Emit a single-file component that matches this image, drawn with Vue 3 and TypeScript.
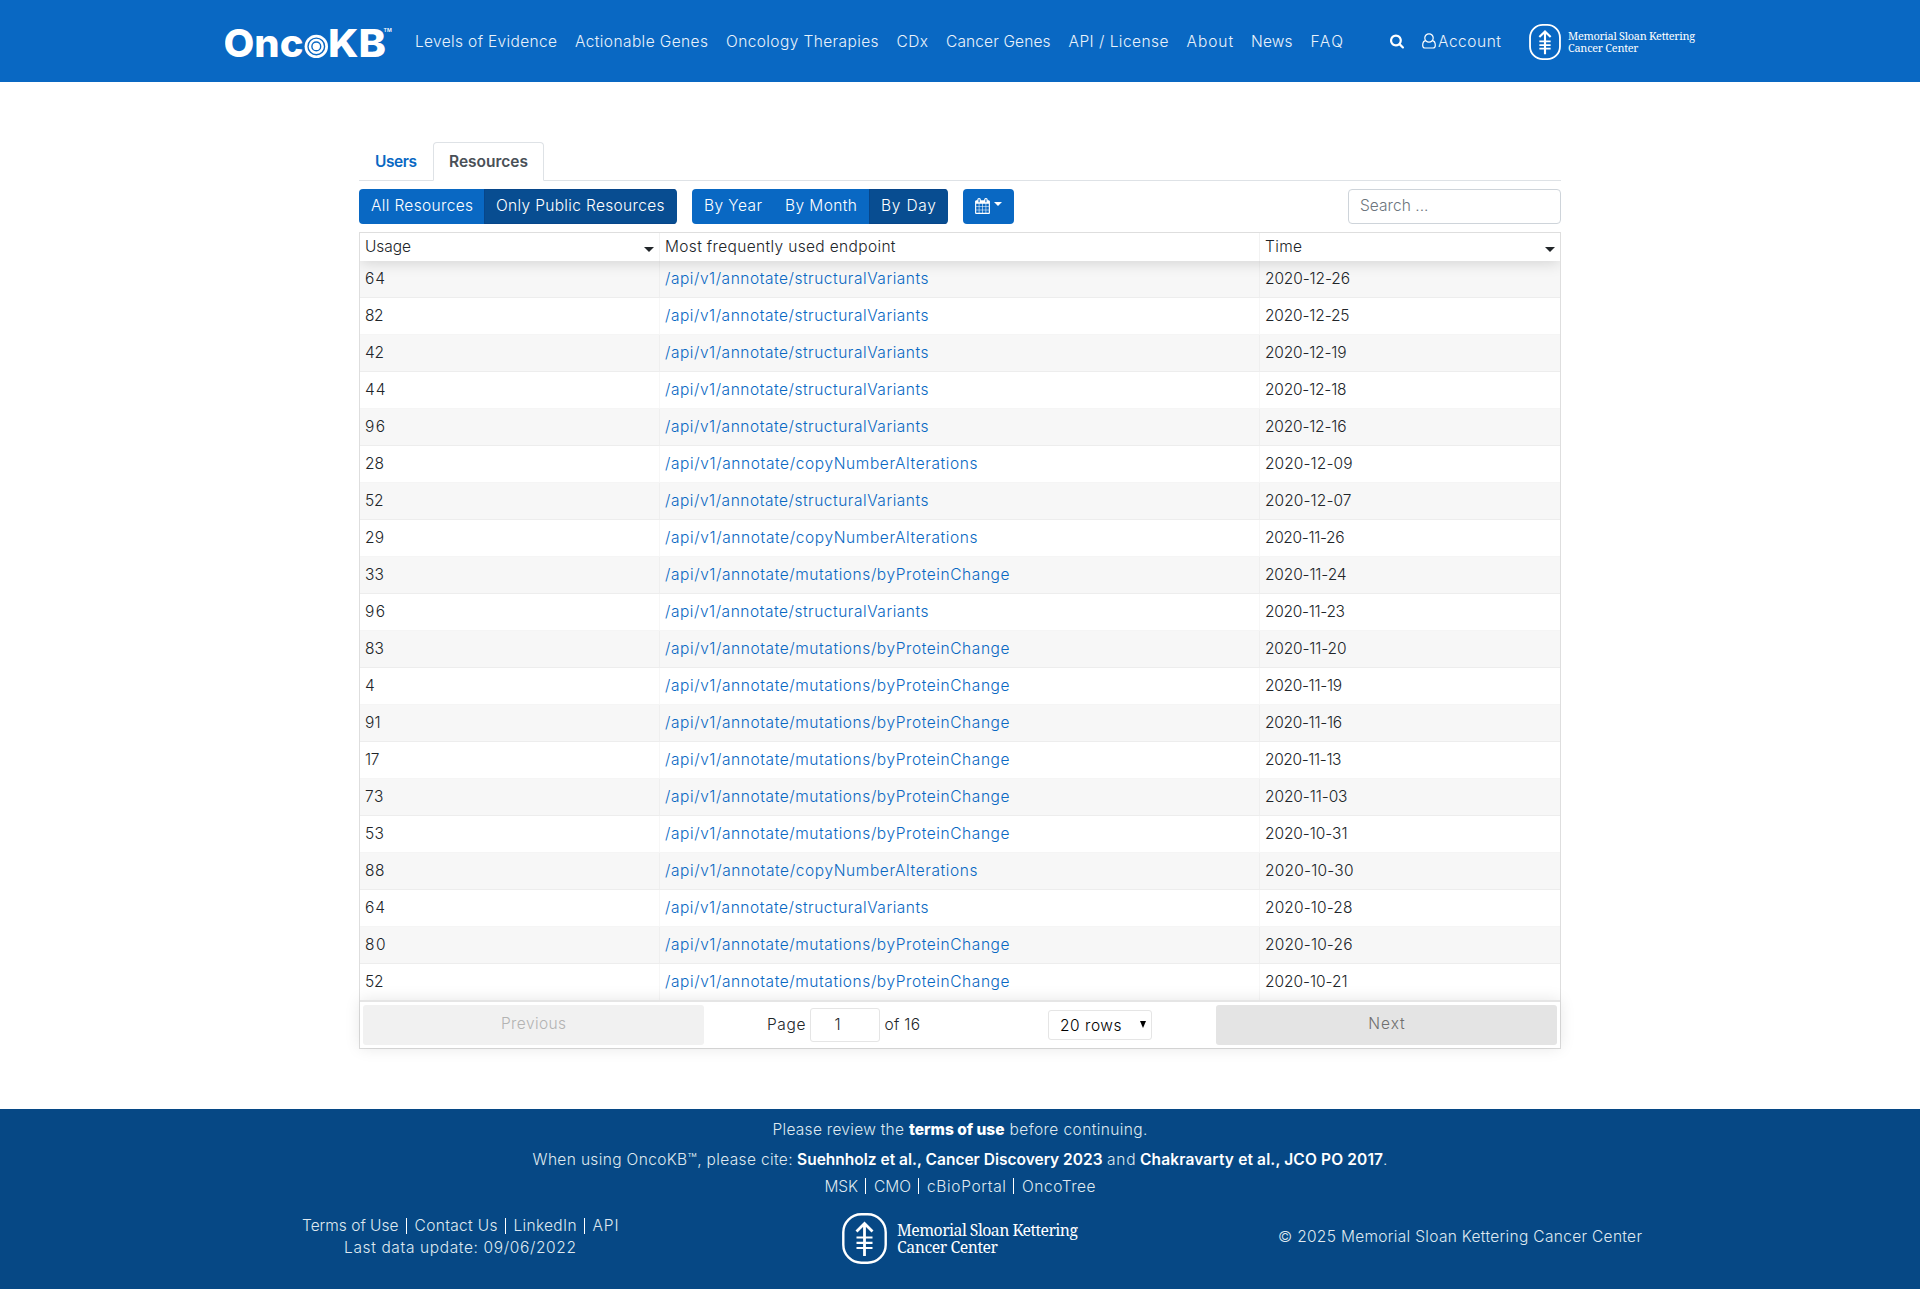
<script setup lang="ts">
interface UsageRow { usage: string; uw: number; endpoint: string; time: string; tw: number }

// Tunes letter-spacing so a label occupies its intended width in pixels.
const vFit = {
  mounted(el: HTMLElement, binding: { value: number }) {
    const count = (el.textContent ?? '').length
    if (count < 2) return
    const spacing = (binding.value - el.getBoundingClientRect().width) / (count - 1)
    el.style.letterSpacing = `${spacing}px`
    el.style.marginRight = `${-spacing}px`
  },
}

const nav = [
  { label: 'Levels of Evidence', w: 142 },
  { label: 'Actionable Genes', w: 133 },
  { label: 'Oncology Therapies', w: 152.5 },
  { label: 'CDx', w: 31.5 },
  { label: 'Cancer Genes', w: 104.5 },
  { label: 'API / License', w: 100 },
  { label: 'About', w: 46.5 },
  { label: 'News', w: 41.5 },
  { label: 'FAQ', w: 32.5 },
]

const SV = '/api/v1/annotate/structuralVariants'
const CN = '/api/v1/annotate/copyNumberAlterations'
const MU = '/api/v1/annotate/mutations/byProteinChange'
const endpointWidth: Record<string, number> = { [SV]: 263.5, [CN]: 312.5, [MU]: 344.5 }

const rows: UsageRow[] = [
  { usage: '64', uw: 20, endpoint: SV, time: '2020-12-26', tw: 85 },
  { usage: '82', uw: 18.5, endpoint: SV, time: '2020-12-25', tw: 84.5 },
  { usage: '42', uw: 19, endpoint: SV, time: '2020-12-19', tw: 81.5 },
  { usage: '44', uw: 20.5, endpoint: SV, time: '2020-12-18', tw: 81.5 },
  { usage: '96', uw: 20, endpoint: SV, time: '2020-12-16', tw: 81.5 },
  { usage: '28', uw: 19, endpoint: CN, time: '2020-12-09', tw: 87.5 },
  { usage: '52', uw: 18.5, endpoint: SV, time: '2020-12-07', tw: 86.5 },
  { usage: '29', uw: 19, endpoint: CN, time: '2020-11-26', tw: 79.5 },
  { usage: '33', uw: 19, endpoint: MU, time: '2020-11-24', tw: 81.5 },
  { usage: '96', uw: 20, endpoint: SV, time: '2020-11-23', tw: 80 },
  { usage: '83', uw: 19, endpoint: MU, time: '2020-11-20', tw: 81.5 },
  { usage: '4', uw: 10, endpoint: MU, time: '2020-11-19', tw: 77 },
  { usage: '91', uw: 15.5, endpoint: MU, time: '2020-11-16', tw: 77 },
  { usage: '17', uw: 14.5, endpoint: MU, time: '2020-11-13', tw: 76.5 },
  { usage: '73', uw: 18.5, endpoint: MU, time: '2020-11-03', tw: 82.5 },
  { usage: '53', uw: 19, endpoint: MU, time: '2020-10-31', tw: 82.5 },
  { usage: '88', uw: 19.5, endpoint: CN, time: '2020-10-30', tw: 88.5 },
  { usage: '64', uw: 20, endpoint: SV, time: '2020-10-28', tw: 87.5 },
  { usage: '80', uw: 20.5, endpoint: MU, time: '2020-10-26', tw: 87.5 },
  { usage: '52', uw: 18.5, endpoint: MU, time: '2020-10-21', tw: 82.5 },
]
</script>

<template>
  <div class="page">
    <header class="header">
      <svg class="logo" width="170" height="82" viewBox="0 0 170 82">
        <g fill="#fff" font-family="Inter, sans-serif" font-weight="800" font-size="38.5">
          <text x="-1.5" y="57.2" textLength="80" lengthAdjust="spacingAndGlyphs">Onc</text>
          <text x="103" y="57.2" textLength="58" lengthAdjust="spacingAndGlyphs">KB</text>
          <text x="158.6" y="32.2" font-size="4.8" font-weight="600" textLength="8.2" lengthAdjust="spacingAndGlyphs">TM</text>
        </g>
        <circle cx="91.3" cy="46.4" r="11.7" fill="#fff" />
        <g fill="none" stroke="#0968c3" stroke-width="1.4">
          <circle cx="91.3" cy="46.4" r="8.3" />
          <circle cx="91.3" cy="46.4" r="4.4" />
        </g>
      </svg>
      <nav class="nav">
        <a v-for="n in nav" :key="n.label"><span v-fit="n.w">{{ n.label }}</span></a>
      </nav>
      <svg class="search-icon" width="14" height="15" viewBox="0 100 1664 1700"><path fill="#fff" d="M1152 832q0-185-131.5-316.5T704 384 387.500 515.500 256 832t131.500 316.500T704 1280t316.500-131.500T1152 832zm512 832q0 52-38 90t-90 38q-54 0-90-38l-343-342q-179 124-399 124-143 0-273.500-55.500t-225-150-150-225T0 832t55.500-273.500 150-225 225-150T704 128t273.500 55.500 225 150 150 225T1408 832q0 220-124 399l343 343q37 37 37 90z" /></svg>
      <svg class="user-icon" width="14" height="16" viewBox="0 0 14 16" fill="none" stroke="#fff" stroke-width="1.2">
        <circle cx="7" cy="5" r="4.200" />
        <path d="M3.600 7.600C1.500 8 .7 9.900.7 12.200c0 1.600.9 2.800 2.300 2.800h8c1.400 0 2.300-1.200 2.300-2.800 0-2.300-.8-4.200-2.900-4.600" />
      </svg>
      <a class="account"><span v-fit="63">Account</span></a>
      <div class="msk">
        <svg width="32" height="36" viewBox="0 0 45 51" fill="none" stroke="#fff">
          <rect x="1.300" y="1.300" width="42.400" height="48.400" rx="18" stroke-width="2.600" />
          <path d="M22.500 10v33M14.500 18.500l8-8 8 8" stroke-width="3" />
          <path d="M14.500 24.500h16M14.500 29.800h16M14.500 35h16" stroke-width="2.400" />
        </svg>
        <div class="msk-text"><div><span v-fit="127">Memorial Sloan Kettering</span></div><div><span v-fit="70.500">Cancer Center</span></div></div>
      </div>
    </header>

    <main class="main">
      <div class="tabs">
        <a class="tab"><span v-fit="42">Users</span></a>
        <a class="tab active"><span v-fit="79">Resources</span></a>
      </div>
      <div class="toolbar">
        <div class="group">
          <button class="b1"><span v-fit="102">All Resources</span></button>
          <button class="b2 on"><span v-fit="168.5">Only Public Resources</span></button>
        </div>
        <div class="group">
          <button class="b3"><span v-fit="58">By Year</span></button>
          <button class="b4"><span v-fit="72">By Month</span></button>
          <button class="b5 on"><span v-fit="55">By Day</span></button>
        </div>
        <button class="cal">
          <svg width="15" height="16" viewBox="64 0 1664 1792"><path fill="#fff" d="M192 1664h288v-288H192v288zm352 0h320v-288H544v288zM192 1312h288V992H192v320zm352 0h320V992H544v320zM192 928h288V640H192v288zm736 736h320v-288H928v288zM544 928h320V640H544v288zm768 736h288v-288h-288v288zm-384-352h320V992H928v320zM576 448V160q0-13-9.500-22.500T544 128h-64q-13 0-22.500 9.500T448 160v288q0 13 9.500 22.500T480 480h64q13 0 22.500-9.500T576 448zm736 864h288V992h-288v320zM928 928h320V640H928v288zm384 0h288V640h-288v288zm32-480V160q0-13-9.500-22.500T1312 128h-64q-13 0-22.500 9.500T1216 160v288q0 13 9.500 22.500t22.500 9.500h64q13 0 22.500-9.500t9.500-22.500zm384-64v1280q0 52-38 90t-90 38H192q-52 0-90-38t-38-90V384q0-52 38-90t90-38h128v-96q0-66 47-113T480 0h64q66 0 113 47t47 113v96h384v-96q0-66 47-113t113-47h64q66 0 113 47t47 113v96h128q52 0 90 38t38 90z" /></svg>
          <i class="caret"></i>
        </button>
        <div class="search"><span v-fit="68.5">Search ...</span></div>
      </div>

      <div class="table">
        <div class="thead">
          <div class="c1"><span v-fit="46">Usage</span><i class="sort"></i></div>
          <div class="c2"><span v-fit="230.5">Most frequently used endpoint</span></div>
          <div class="c3"><span v-fit="37">Time</span><i class="sort"></i></div>
        </div>
        <div class="tbody">
          <div v-for="r in rows" :key="r.time" class="tr">
            <div class="c1"><span v-fit="r.uw">{{ r.usage }}</span></div>
            <div class="c2"><a v-fit="endpointWidth[r.endpoint]">{{ r.endpoint }}</a></div>
            <div class="c3"><span v-fit="r.tw">{{ r.time }}</span></div>
          </div>
        </div>
        <div class="pager">
          <div class="pbtn disabled"><span v-fit="65">Previous</span></div>
          <div class="center">
            <div class="pageinfo"><span v-fit="38.5">Page</span><div class="num">1</div><span v-fit="35.500">of 16</span></div>
            <div class="select"><span v-fit="61.500">20 rows</span><i></i></div>
          </div>
          <div class="pbtn next"><span v-fit="36.5">Next</span></div>
        </div>
      </div>
    </main>

    <footer class="footer">
      <div class="line l1"><span v-fit="131.5">Please review the</span><b class="strong" v-fit="95.5">terms of use</b><span v-fit="138">before continuing.</span></div>
      <div class="line l2"><span v-fit="260">When using OncoKB™, please cite:</span><b v-fit="305.5">Suehnholz et al., Cancer Discovery 2023</b><span v-fit="28.5">and</span><span class="cite"><b v-fit="243">Chakravarty et al., JCO PO 2017</b>.</span></div>
      <div class="line links l3"><a><span v-fit="33.500">MSK</span></a><a><span v-fit="37">CMO</span></a><a><span v-fit="79">cBioPortal</span></a><a><span v-fit="73.500">OncoTree</span></a></div>
      <div class="bottom">
        <div class="left">
          <div class="links"><a><span v-fit="96.500">Terms of Use</span></a><a><span v-fit="83">Contact Us</span></a><a><span v-fit="63">LinkedIn</span></a><a><span v-fit="26">API</span></a></div>
          <div class="update"><span v-fit="232">Last data update: 09/06/2022</span></div>
        </div>
        <div class="msk big">
          <svg width="45" height="51" viewBox="0 0 45 51" fill="none" stroke="#fff">
            <rect x="1.300" y="1.300" width="42.400" height="48.400" rx="18" stroke-width="2.400" />
            <path d="M22.500 10v33M14.500 18.500l8-8 8 8" stroke-width="2.800" />
            <path d="M14.500 24.500h16M14.500 29.800h16M14.500 35h16" stroke-width="2.200" />
          </svg>
          <div class="msk-text"><div><span v-fit="181">Memorial Sloan Kettering</span></div><div><span v-fit="101">Cancer Center</span></div></div>
        </div>
        <div class="copy"><span v-fit="364">© 2025 Memorial Sloan Kettering Cancer Center</span></div>
      </div>
    </footer>
  </div>
</template>

<style>
body { background: #fff; }
</style>

<style scoped>
* { box-sizing: border-box; }
.page { font: 350 15.5px/24px Inter, sans-serif; color: #212529; width: 1920px; height: 1289px; display: flex; flex-direction: column; overflow: hidden; }
span, a, b { white-space: nowrap; }
button { font: inherit; color: #fff; border: 0; background: #0968c3; margin: 0; padding: 0; }

.header { height: 82px; background: #0968c3; color: #e9f2fb; display: flex; align-items: center; padding-left: 225px; flex: none; }
.logo { flex: none; width: 170px; height: 82px; }
.nav { display: flex; gap: 18px; margin-left: 20px; width: 970px; flex: none; padding-top: 1px; }
.search-icon { margin-left: 5px; }
.user-icon { margin-left: 17.500px; }
.account { margin-left: 2.500px; width: 67.500px; padding-top: 1px; }
.msk { display: flex; align-items: center; margin-left: 23.500px; gap: 7px; font-family: "Noto Serif", "Liberation Serif", serif; font-weight: 400; color: #fff; padding-top: 1px; }
.msk-text { font-size: 10.900px; line-height: 12px; padding-top: 1px; }

.main { width: 1202px; margin: 60px auto 0; flex: none; height: 967px; }
.tabs { display: flex; height: 39px; border-bottom: 1px solid #dee2e6; font-weight: 600; }
.tab { height: 39px; color: #0968c3; padding: 7px 16px 0; border: 1px solid transparent; width: 74px; padding-left: 15px; }
.tab.active { width: 111px; color: #495057; background: #fff; border-color: #dee2e6 #dee2e6 #fff; border-radius: 4px 4px 0 0; }
.toolbar { display: flex; margin-top: 8px; height: 35px; }
.group { display: flex; margin-right: 15px; border-radius: 4px; overflow: hidden; }
.toolbar button { height: 35px; padding-left: 12px; padding-bottom: 2px; text-align: left; }
.toolbar button.on { background: #084d91; box-shadow: inset 1px 0 #07468a, inset 0 1px #07468a, inset 0 -1px #07468a; }
.toolbar .b1 { width: 125px; }
.toolbar .b2 { width: 193px; }
.toolbar .b3 { width: 81px; }
.toolbar .b4 { width: 96px; }
.toolbar .b5 { width: 79px; }
.toolbar .cal { width: 51px; border-radius: 4px; display: flex; align-items: center; gap: 4px; }
.caret { border: 4.500px solid transparent; border-top: 4.500px solid #fff; border-bottom: 0; width: 0; height: 0; margin-top: -3px; }
.search { margin-left: auto; width: 213px; height: 35px; border: 1px solid #ced4da; border-radius: 4px; color: #6c757d; padding: 4px 11px; }

.table { margin-top: 8px; border: 1px solid rgba(0, 0, 0, 0.13); height: 817px; }
.thead { display: flex; height: 28px; position: relative; z-index: 1; background: #fff; box-shadow: 0 2px 15px 0 rgba(0, 0, 0, 0.15); clip-path: inset(0 0 -20px 0); }
.thead > div { border-right: 1px solid rgba(0, 0, 0, 0.05); padding: 2px 5px 0; display: flex; justify-content: space-between; }
.thead > div:last-child { border-right: 0; }
.c1 { width: 300px; }
.c2 { width: 600px; }
.c3 { width: 300px; }
.sort { border: 5px solid transparent; border-top: 5px solid #212529; border-bottom: 0; height: 0; margin-top: 12px; }
.tr { display: flex; height: 37px; border-bottom: 1px solid rgba(0, 0, 0, 0.04); }
.tr:nth-child(odd) { background: #f7f7f7; }
.tr:last-child { border-bottom: 0; }
.tr > div { padding: 6px 5px 0; border-right: 1px solid rgba(0, 0, 0, 0.03); }
.tr > div:last-child { border-right: 0; }
.tr a { color: #0968c3; }

.pager { display: flex; height: 48px; margin-top: -1px; background: #fff; position: relative; z-index: 1; border-top: 2px solid #e5e5e5; padding: 3px; box-shadow: 0 0 15px 0 rgba(0, 0, 0, 0.1); }
.pbtn { height: 40px; line-height: 38px; width: 341px; flex: none; background: #f1f1f1; border-radius: 3px; color: #b3b3b3; text-align: center; }
.pbtn.next { background: #e4e4e4; color: #6f6f6f; }
.center { flex: 1; display: flex; padding-left: 63px; }
.pageinfo { display: flex; align-items: center; line-height: 37px; height: 39px; }
.num { width: 70px; height: 34px; line-height: 32px; margin: 1px 5px 0 4px; border: 1px solid #e5e5e5; border-radius: 3px; padding-left: 24px; color: #212529; }
.select { margin: 5px 0 0 128px; width: 104px; height: 30px; line-height: 30px; border: 1px solid #e5e5e5; border-radius: 3px; color: #000; padding: 0 5px 0 11px; display: flex; justify-content: space-between; align-items: flex-start; }
.select i { border: 3px solid transparent; border-top: 7px solid #000; border-bottom: 0; margin-top: 10px; }

.footer { height: 180px; background: #064885; color: #dfe8f0; flex: none; }
.line { display: flex; justify-content: center; gap: 5px; height: 24px; }
.line b, .cite b { color: #fff; font-weight: 600; }
.line b.strong { font-weight: 800; }
.l1 { padding-top: 9px; height: 38px; }
.l2 { height: 28px; padding-top: 1px; gap: 4.500px; }
.links { display: flex; gap: 0; }
.links a { padding: 0 8px; position: relative; }
.links a:not(:last-child)::after { content: ""; position: absolute; right: 0; top: 3px; width: 1px; height: 16px; background: #fff; }
.bottom { display: flex; margin-top: 13px; height: 51px; }
.left { width: 842px; padding: 3px 0 0 294px; line-height: 22px; }
.update { padding-left: 50px; }
.msk.big { margin: 0; width: 436px; gap: 10px; padding-top: 2px; }
.big .msk-text { font-size: 15.800px; line-height: 17px; }
.copy { padding-top: 13px; }
</style>
